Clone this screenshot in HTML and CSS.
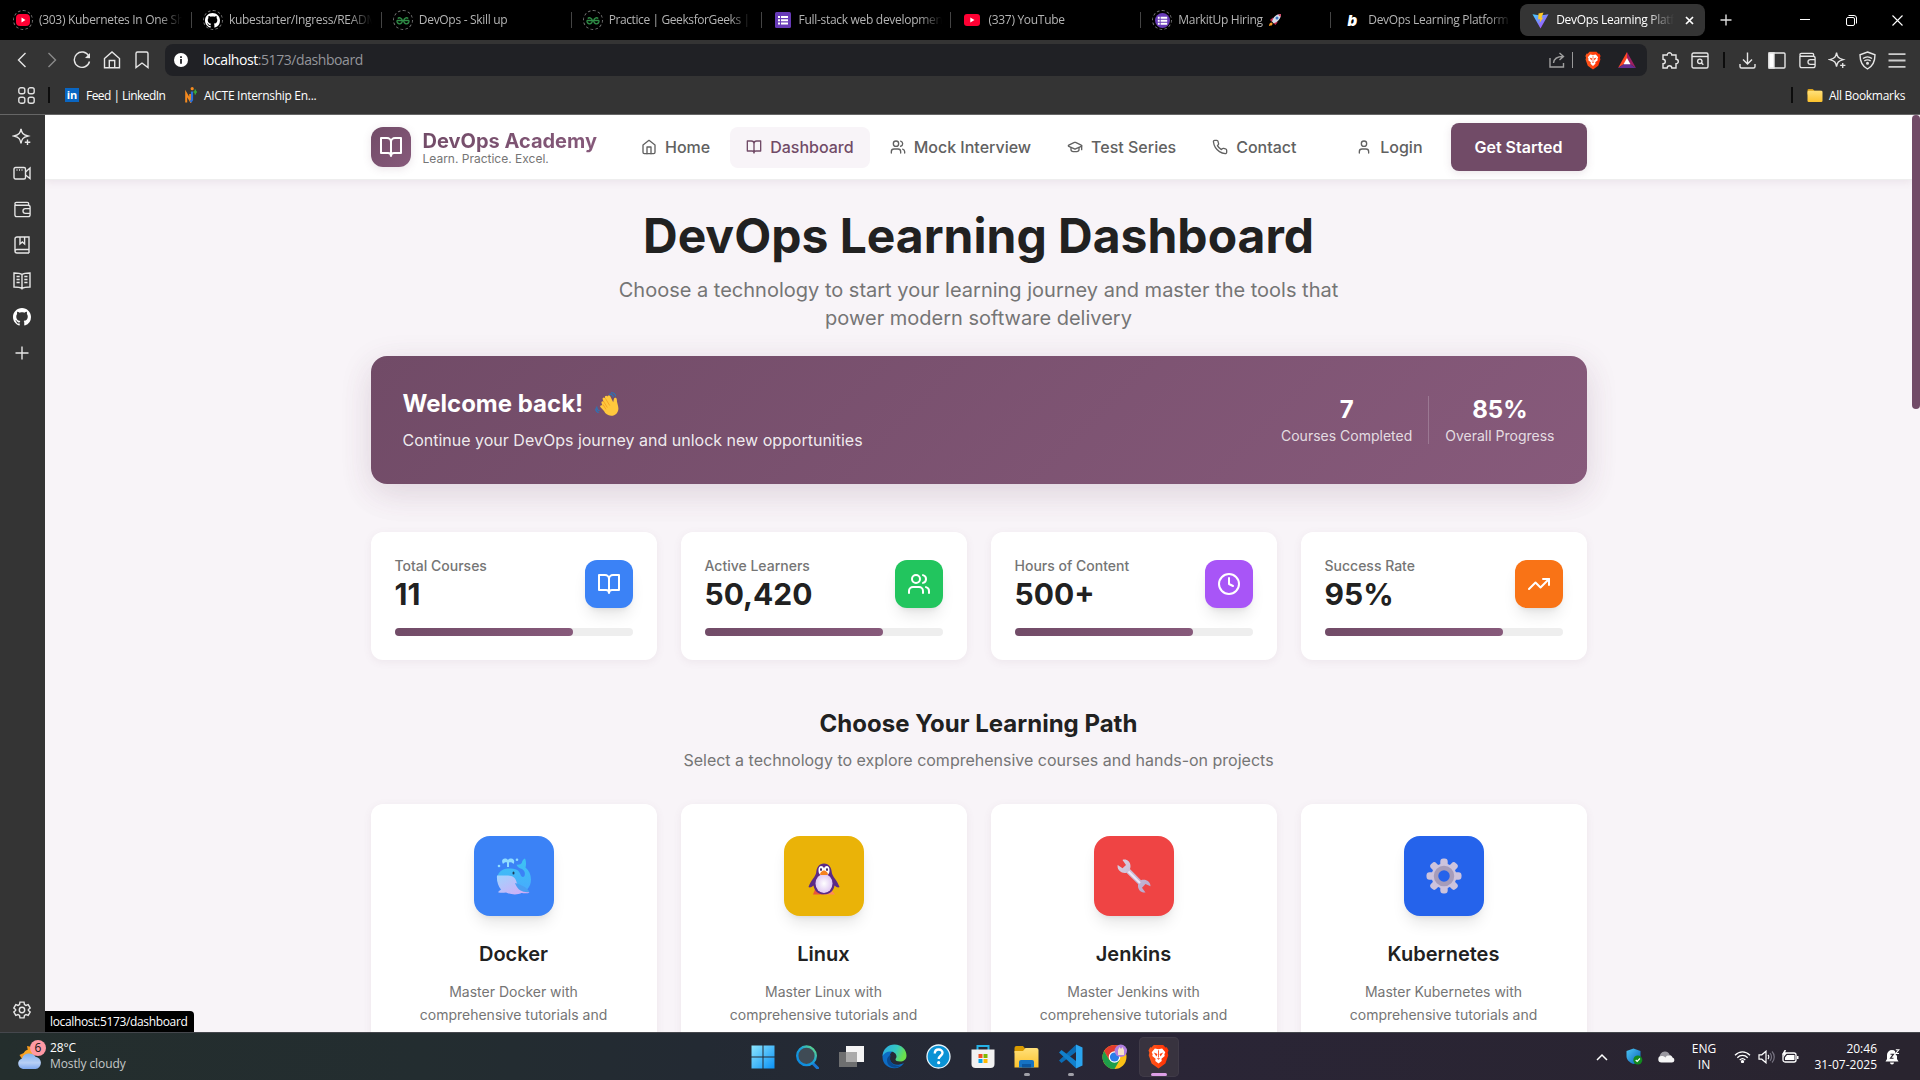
FILE: index.html
```html
<!DOCTYPE html>
<html lang="en">
<head>
<meta charset="utf-8">
<title>DevOps Learning Platform</title>
<link rel="stylesheet" href="styles.css">
</head>
<body>
<svg width="0" height="0" class="defs" aria-hidden="true">
  <defs>
    <linearGradient id="gWin" x1="0" y1="0" x2="1" y2="1"><stop offset="0" stop-color="#8ce6ff"/><stop offset="1" stop-color="#0a91f5"/></linearGradient>
    <linearGradient id="gSearch" x1="0" y1="1" x2="1" y2="0"><stop offset="0" stop-color="#0a84e0"/><stop offset=".55" stop-color="#1aa0d8"/><stop offset="1" stop-color="#6be07a"/></linearGradient>
    <linearGradient id="gEdge" x1="0" y1="0" x2="1" y2=".35"><stop offset="0" stop-color="#2aa9e8"/><stop offset=".6" stop-color="#35c8c0"/><stop offset="1" stop-color="#6be04a"/></linearGradient>
    <linearGradient id="gFolder" x1="0" y1="0" x2="0" y2="1"><stop offset="0" stop-color="#ffe07a"/><stop offset="1" stop-color="#fcc22c"/></linearGradient>
    <linearGradient id="gBrave" x1="0" y1="0" x2="1" y2="0"><stop offset="0" stop-color="#ff5a1f"/><stop offset="1" stop-color="#ff2d00"/></linearGradient>
    <linearGradient id="gVite" x1="0" y1="0" x2="1" y2="1"><stop offset="0" stop-color="#41d1ff"/><stop offset="1" stop-color="#bd34fe"/></linearGradient>
    <linearGradient id="gCloud" x1="0" y1="0" x2="0" y2="1"><stop offset="0" stop-color="#7fb0f0"/><stop offset=".6" stop-color="#b8d0f5"/><stop offset="1" stop-color="#7ea8ee"/></linearGradient>
    <linearGradient id="gWhale" x1="0" y1="0" x2="0" y2="1"><stop offset="0" stop-color="#3cc4f2"/><stop offset="1" stop-color="#48a8ff"/></linearGradient>
    <linearGradient id="gBelly" x1="0" y1="0" x2="1" y2="1"><stop offset="0" stop-color="#9fd4ff"/><stop offset="1" stop-color="#d7a8f5"/></linearGradient>
    <linearGradient id="gMetal" x1="0" y1="0" x2="1" y2="1"><stop offset="0" stop-color="#d9d2e2"/><stop offset="1" stop-color="#b7a5cc"/></linearGradient>
    <radialGradient id="gPeng"><stop offset="0" stop-color="#ffffff"/><stop offset="1" stop-color="#e0c8f2"/></radialGradient>
    <linearGradient id="gShield" x1="0" y1="0" x2="1" y2="1"><stop offset="0" stop-color="#4cc6f5"/><stop offset="1" stop-color="#0a5fb8"/></linearGradient>

    <symbol id="book-open" viewBox="0 0 24 24"><path d="M2 3h6a4 4 0 0 1 4 4v14a3 3 0 0 0-3-3H2zM22 3h-6a4 4 0 0 0-4 4v14a3 3 0 0 1 3-3h7z"/></symbol>
    <symbol id="home" viewBox="0 0 24 24"><path d="m3 9 9-7 9 7v11a2 2 0 0 1-2 2H5a2 2 0 0 1-2-2z"/><path d="M9 22V12h6v10"/></symbol>
    <symbol id="users" viewBox="0 0 24 24"><path d="M16 21v-2a4 4 0 0 0-4-4H6a4 4 0 0 0-4 4v2"/><circle cx="9" cy="7" r="4"/><path d="M22 21v-2a4 4 0 0 0-3-3.87M16 3.13a4 4 0 0 1 0 7.75"/></symbol>
    <symbol id="cap" viewBox="0 0 24 24"><path d="M21.42 10.92a1 1 0 0 0-.02-1.84L12.83 5.180a2 2 0 0 0-1.66 0l-8.570 3.9a1 1 0 0 0 0 1.83l8.570 3.910a2 2 0 0 0 1.66 0z"/><path d="M22 10v6M6 12.500V16a6 3 0 0 0 12 0v-3.500"/></symbol>
    <symbol id="phone" viewBox="0 0 24 24"><path d="M22 16.920v3a2 2 0 0 1-2.180 2 19.790 19.790 0 0 1-8.630-3.070 19.500 19.500 0 0 1-6-6 19.790 19.790 0 0 1-3.070-8.670A2 2 0 0 1 4.110 2h3a2 2 0 0 1 2 1.720c.127.960.361 1.903.700 2.810a2 2 0 0 1-.450 2.110L8.090 9.910a16 16 0 0 0 6 6l1.270-1.270a2 2 0 0 1 2.110-.450c.907.339 1.850.573 2.810.700A2 2 0 0 1 22 16.920z"/></symbol>
    <symbol id="user" viewBox="0 0 24 24"><path d="M19 21v-2a4 4 0 0 0-4-4H9a4 4 0 0 0-4 4v2"/><circle cx="12" cy="7" r="4"/></symbol>
    <symbol id="clock" viewBox="0 0 24 24"><circle cx="12" cy="12" r="10"/><path d="M12 6v6l4 2"/></symbol>
    <symbol id="trend" viewBox="0 0 24 24"><path d="m22 7-8.500 8.500-5-5L2 17"/><path d="M16 7h6v6"/></symbol>
    <symbol id="sparkle" viewBox="0 0 20 20"><path d="M9 1.800c.8 4.500 1.700 5.800 7 7.200-5.300 1.400-6.200 3-7 7.500-.8-4.500-1.700-6.100-7-7.500C7.300 7.600 8.200 6.300 9 1.800zM15.500 12.500v5.500M12.800 15.200h5.500"/></symbol>
    <symbol id="wallet" viewBox="0 0 20 20"><path d="M2 5v10.500a2 2 0 0 0 2 2h12a2 2 0 0 0 2-2V7.500a2 2 0 0 0-2-2H3.500A1.500 1.500 0 0 1 2 4a1.500 1.500 0 0 1 1.500-1.500H15a1.500 1.500 0 0 1 1.500 1.500v1.500M18 9h-5a2.500 2.500 0 0 0 0 5h5"/></symbol>
    <symbol id="github" viewBox="0 0 16 16"><path d="M8 0C3.580 0 0 3.580 0 8c0 3.540 2.290 6.530 5.470 7.590.4.070.550-.170.550-.380 0-.190-.010-.820-.010-1.490-2.010.370-2.530-.490-2.690-.940-.090-.230-.480-.940-.820-1.130-.280-.150-.680-.520-.010-.530.630-.010 1.080.580 1.230.820.720 1.210 1.870.870 2.330.660.070-.520.280-.870.510-1.070-1.780-.2-3.640-.890-3.640-3.950 0-.870.310-1.590.820-2.150-.080-.2-.360-1.020.080-2.120 0 0 .670-.210 2.200.820.640-.180 1.320-.270 2-.270s1.360.090 2 .270c1.530-1.040 2.200-.820 2.200-.820.440 1.100.160 1.920.080 2.120.510.560.820 1.270.820 2.150 0 3.070-1.870 3.750-3.650 3.950.290.250.540.730.540 1.480 0 1.070-.010 1.930-.010 2.200 0 .210.150.460.550.380A8.010 8.010 0 0 0 16 8c0-4.420-3.580-8-8-8z"/></symbol>
    <symbol id="brave" viewBox="0 0 20 24"><path fill="url(#gBrave)" d="M5.500 1h9l2.200 2.400 1.300-.2 1.600 3-.8 2.300.6 2.200-2.800 8L10 23.500 3.400 18.700l-2.800-8 .6-2.200-.8-2.300 1.600-3 1.300.2z"/><path fill="#fff" d="m10 5 3.500-.7 3 3.500-.9 2 .4 1.800-3.200 2.600.3 2L10 18.800l-3.100-2.600.3-2L4 11.600l.4-1.800-.9-2 3-3.500z"/><path fill="#ff4010" d="M5.500 8.200 9 9.500 8 12zM14.500 8.200 11 9.500l1 2.500zM8.300 13.700h3.400L10 15.200zM9.600 6h.8v7h-.8z"/></symbol>
    <symbol id="gfg" viewBox="0 0 16 10"><path fill="none" stroke="#2f8d46" stroke-width="1.500" d="M1 5h14M1.200 5A3 3 0 1 0 7 5a3 3 0 0 0-5-2.300M14.800 5A3 3 0 1 1 9 5a3 3 0 0 1 5-2.300"/></symbol>
    <symbol id="yt" viewBox="0 0 16 12"><rect width="16" height="12" rx="3" fill="#ff0033"/><path fill="#fff" d="M6.300 3.500v5l4.200-2.500z"/></symbol>
    <symbol id="forms" viewBox="0 0 16 16"><rect width="16" height="16" rx="1.500" fill="#673ab7"/><path fill="#fff" d="M3 4h2v2H3zM3 7.200h2v2H3zM3 10.400h2v2H3zM6 4h7v2H6zM6 7.200h7v2H6zM6 10.400h7v2H6z"/></symbol>
    <symbol id="folder" viewBox="0 0 16 16"><path fill="#d9a01a" d="M0 2.500A1.500 1.500 0 0 1 1.500 1h4L7.500 3H14v4H0z"/><rect y="3" width="16" height="12" rx="1.300" fill="url(#gFolder)"/></symbol>
  </defs>
</svg>

<div class="tabstrip">
  <div class="tab"><span class="fav ring"><svg width="14" height="12" viewBox="0 0 14 12"><rect width="14" height="12" rx="4" fill="#ff0033"/><path fill="#fff" d="M5.500 3.500v5l4-2.500z"/></svg></span><span class="tab-title">(303) Kubernetes In One Sh</span></div>
  <div class="tab"><span class="fav ring"><svg width="15" height="15" fill="#fff"><use href="#github"/></svg></span><span class="tab-title">kubestarter/Ingress/README</span></div>
  <div class="tab"><span class="fav ring"><svg width="14" height="9"><use href="#gfg"/></svg></span><span class="tab-title">DevOps - Skill up</span></div>
  <div class="tab"><span class="fav ring"><svg width="14" height="9"><use href="#gfg"/></svg></span><span class="tab-title tight">Practice | GeeksforGeeks | A</span></div>
  <div class="tab"><span class="fav"><svg width="16" height="16"><use href="#forms"/></svg></span><span class="tab-title">Full-stack web developmen</span></div>
  <div class="tab"><span class="fav"><svg width="16" height="12"><use href="#yt"/></svg></span><span class="tab-title">(337) YouTube</span></div>
  <div class="tab"><span class="fav ring"><svg class="round" width="15" height="15"><use href="#forms"/></svg></span><span class="tab-title">MarkitUp Hiring <svg class="rocket" width="14" height="14" viewBox="0 0 14 14"><path fill="#c22a4e" d="m2 7 3-2.500 1 1.500-2 3zM7.500 12l2.200-3-1.500-1-3 2z"/><path fill="#d8dde8" d="M4 8.500C5 4.500 8 1 13 1c0 4.500-3 8-7.500 9.200z"/><path fill="#d63a5c" d="M10 1.500 13 1l-.4 3z"/><circle cx="9" cy="5" r="1.500" fill="#3a78c9"/><path fill="#f59a23" d="M1 13c0-2 1-3.500 2.600-3.600l1 1C4.500 12 3 13 1 13z"/></svg></span></div>
  <div class="tab last"><span class="fav"><b class="b-mark">b</b></span><span class="tab-title">DevOps Learning Platform</span></div>
  <div class="tab active"><span class="fav"><svg width="17" height="17" viewBox="0 0 17 17"><path fill="url(#gVite)" d="M.5 2.200 8.500 16.500 16.500 2.200 8.500 3.600z"/><path fill="#ffc824" d="m11.500.5-5 1-.3 6 2-.4-.6 4 3.600-5.500-1.800.3z"/></svg></span><span class="tab-title">DevOps Learning Platf</span><svg class="tab-x" width="9" height="9" viewBox="0 0 9 9"><path d="m1 1 7 7M8 1 1 8" stroke="#fff" stroke-width="1.700"/></svg></div>
  <svg class="new-tab" width="12" height="12" viewBox="0 0 12 12"><path d="M6 .5v11M.5 6h11" stroke="#ddd" stroke-width="1.400"/></svg>
  <div class="win-controls">
    <span><svg width="10" height="10"><path d="M0 4.500h10" stroke="#fff"/></svg></span>
    <span><svg width="11" height="11" fill="none" stroke="#fff"><rect x=".5" y="2.500" width="8" height="8" rx="1.500"/><path d="M2.500.5H8A2.500 2.500 0 0 1 10.500 3v5.500"/></svg></span>
    <span><svg width="11" height="11"><path d="m.5.5 10 10M10.500.5l-10 10" stroke="#fff" stroke-width="1.100"/></svg></span>
  </div>
</div>

<div class="toolbar">
  <div class="slots">
    <span><svg width="10" height="16" viewBox="0 0 10 16"><path d="M8.500 1 1.500 8l7 7"/></svg></span>
    <span class="dim"><svg width="10" height="16" viewBox="0 0 10 16"><path d="m1.500 1 7 7-7 7"/></svg></span>
    <span><svg width="18" height="18" viewBox="0 0 18 18"><path d="M15.800 5A7.700 7.700 0 1 0 16.500 10.500"/><path d="m12 7 5 .3L17 2z" fill="#e6e6e6" stroke="none"/></svg></span>
    <span><svg width="18" height="18" viewBox="0 0 18 18"><path d="M1.500 7.500 9 1l7.500 6.500V16.700h-15zM6.300 16.500V9.500h5.400v7"/></svg></span>
    <span><svg width="14" height="18" viewBox="0 0 14 18"><path d="M1 2.500A1.500 1.500 0 0 1 2.500 1h9A1.500 1.500 0 0 1 13 2.500v14l-6-4.500-6 4.500z"/></svg></span>
  </div>
  <div class="urlbar">
    <svg class="info" width="14" height="14" viewBox="0 0 14 14"><circle cx="7" cy="7" r="7" fill="#fff"/><path d="M6.100 6h1.800v4.700H6.100zM6.100 3.200h1.800v1.700H6.100z" fill="#202125"/></svg>
    <span class="url"><span class="host">localhost</span>:5173/dashboard</span>
    <svg class="share" width="16" height="16" viewBox="0 0 16 16" fill="none" stroke="#a0a0a0" stroke-width="1.400"><path d="M1 6v9h13.500v-4M4.500 11C5 6.500 8 4.500 14 4.500M10.500 1 14.500 4.500l-4 3.500"/></svg>
    <i class="url-sep"></i>
    <svg class="lion" width="16" height="19"><use href="#brave"/></svg>
    <svg class="bat" width="18" height="16" viewBox="0 0 18 16"><path fill="#ff4724" d="M9 0 0 16 6 12l3-5z"/><path fill="#9e1f63" d="m9 0 9 16-6-4-3-5z"/><path fill="#662d91" d="M0 16h18l-6-4H6z"/><path fill="#fff" d="m9 6 3.500 6.200h-7z"/></svg>
  </div>
  <div class="slots right">
    <span><svg width="19" height="19" viewBox="0 0 19 19"><path d="M2 4h4.200a2.300 2.300 0 1 1 4.600 0H15v4.200a2.300 2.300 0 1 1 0 4.600V17h-4.200a2.300 2.300 0 0 0-4.600 0H2v-4.200a2.300 2.300 0 0 0 0-4.600z"/></svg></span>
    <span><svg width="18" height="17" viewBox="0 0 18 17"><rect x="1" y="1" width="16" height="15" rx="1.500"/><path d="M1 4.500h16"/><circle cx="8.800" cy="9.300" r="2.200"/><path d="m10.500 11 1.800 1.800"/></svg></span>
    <i class="sep"></i>
    <span><svg width="17" height="17" viewBox="0 0 17 17"><path d="M8.500.5v11M4 7.500l4.500 4.500L13 7.500M1 12v2.500A1.500 1.500 0 0 0 2.500 16h12a1.500 1.500 0 0 0 1.500-1.500V12"/></svg></span>
    <span><svg width="18" height="17" viewBox="0 0 18 17"><rect x="1" y="1" width="16" height="15" rx="1"/><path d="M1 1h5v15H1z" fill="#fff"/></svg></span>
    <span><svg width="19" height="19"><use href="#wallet"/></svg></span>
    <span><svg width="19" height="19"><use href="#sparkle"/></svg></span>
    <span><svg width="17" height="19" viewBox="0 0 17 19"><path d="M8.500 1 16 3.800c0 7-2 11.400-7.500 14.200C3 15.200 1 10.800 1 3.800zM4 7.500c3-2.200 6-2.200 9 0M5.300 10c2-1.400 4.400-1.400 6.400 0"/><circle cx="8.500" cy="12.200" r=".8"/></svg></span>
    <span><svg width="18" height="15" viewBox="0 0 18 15" class="burger"><path d="M.5 1.200h17M.5 7.500h17M.5 13.800h17"/></svg></span>
  </div>
</div>

<div class="bookmarks">
  <svg class="apps" width="17" height="17" viewBox="0 0 17 17" fill="none" stroke="#e0e0e0" stroke-width="1.400"><rect x=".8" y=".8" width="6" height="6" rx="2"/><rect x="10.200" y=".8" width="6" height="6" rx="2"/><rect x=".8" y="10.200" width="6" height="6" rx="2"/><rect x="10.200" y="10.200" width="6" height="6" rx="2"/></svg>
  <i class="sep bsep"></i>
  <span class="linkedin">in</span>
  <span class="bm bm1">Feed | LinkedIn</span>
  <svg class="aicte" width="12" height="16" viewBox="0 0 12 16"><path d="M1.200 15.500V6.500l4 7V7" fill="none" stroke="#f58a1f" stroke-width="2"/><path d="M7 4.500V13l-1.500 2" fill="none" stroke="#2a6fdb" stroke-width="2.200"/><circle cx="7.200" cy="1.700" r="1.600" fill="#f58a1f"/><path d="M10.300 2.500v5M8.500 5h3.500" stroke="#35a83a" stroke-width="1.500"/></svg>
  <span class="bm bm2">AICTE Internship En...</span>
  <i class="sep rsep"></i>
  <svg width="16" height="15" class="bfolder"><use href="#folder"/></svg>
  <span class="bm bm3">All Bookmarks</span>
</div>

<div class="window">
  <nav class="sidebar">
    <span><svg width="20" height="20"><use href="#sparkle"/></svg></span>
    <span><svg width="18" height="14" viewBox="0 0 18 14"><rect x="1" y="1.500" width="11.500" height="11.500" rx="1.500"/><path d="m12.500 6 4.500-4v10.500l-4.500-3.500M3.500 4h1M6 4h1M8.500 4h1"/></svg></span>
    <span><svg width="19" height="19"><use href="#wallet"/></svg></span>
    <span><svg width="16" height="18" viewBox="0 0 16 18"><path d="M15 13.500V1H3a2 2 0 0 0-2 2v12a2 2 0 0 0 2 2h12M15 13.500H3a1.800 1.800 0 0 0-2 1.600M15 13.500V17M6 1v7l2.300-2 2.300 2V1"/></svg></span>
    <span><svg width="18" height="18" viewBox="0 0 18 18"><path d="M9 2.500C7 1 4 1 1 1v14c3 0 6 0 8 1.500C11 15 14 15 17 15V1c-3 0-6 0-8 1.500zM9 2.500v15M3.500 4.500h3.200M3.500 7.500h3.200M3.500 10.500h3.200M11.300 4.500h3.200M11.300 7.500h3.200M11.300 10.500h3.200"/></svg></span>
    <span class="solid"><svg width="18" height="18"><use href="#github"/></svg></span>
    <span><svg width="14" height="14" viewBox="0 0 14 14"><path d="M7 .5v13M.5 7h13"/></svg></span>
    <span class="settings"><svg width="18" height="18" viewBox="0 0 24 24" class="gear"><path d="m9.300 1.500-.6 3.200-2 1.200-3-1.200L1 9.400l2.500 2v1.200l-2.500 2 2.700 4.700 3-1.200 2 1.200.6 3.200h5.400l.6-3.200 2-1.200 3 1.200 2.700-4.700-2.500-2v-1.200l2.500-2-2.700-4.700-3 1.200-2-1.200-.6-3.200z"/><circle cx="12" cy="12" r="3.600"/></svg></span>
  </nav>

  <div class="page">
    <header class="site-header">
      <div class="container header-row">
        <div class="logo"><svg class="ln" width="24" height="24"><use href="#book-open"/></svg></div>
        <div class="brand"><div class="brand-name">DevOps Academy</div><div class="brand-tag">Learn. Practice. Excel.</div></div>
        <nav class="menu">
          <a><svg class="ln" width="16" height="16"><use href="#home"/></svg>Home</a>
          <a class="current"><svg class="ln" width="16" height="16"><use href="#book-open"/></svg>Dashboard</a>
          <a><svg class="ln" width="16" height="16"><use href="#users"/></svg>Mock Interview</a>
          <a><svg class="ln" width="16" height="16"><use href="#cap"/></svg>Test Series</a>
          <a><svg class="ln" width="16" height="16"><use href="#phone"/></svg>Contact</a>
        </nav>
        <div class="auth">
          <a class="login"><svg class="ln" width="16" height="16"><use href="#user"/></svg>Login</a>
          <a class="cta">Get Started</a>
        </div>
      </div>
    </header>

    <main class="container">
      <h1>DevOps Learning Dashboard</h1>
      <p class="lead">Choose a technology to start your learning journey and master the tools that power modern software delivery</p>

      <section class="banner">
        <div>
          <h2>Welcome back!
            <svg class="wave" width="24" height="24" viewBox="0 0 24 24"><path fill="none" stroke="#2b74b8" stroke-width="1.200" d="M14 2.300c2-.6 4 .6 4.500 3M16 .8c2.500-.3 4.300 1.200 4.600 3.500M1.800 14.500c-.3 2 .7 3.700 2.700 4.500M.7 16.500c0 2 1 3.500 3 4.200"/><path fill="#ffc83d" d="M4.600 11.200c-.8-1.300 1-2.600 2-1.300L5.700 7.300c-.7-1.500 1.400-2.600 2.200-1.200l.4.700-.3-1.200c-.6-1.600 1.600-2.500 2.300-1 .6-1.600 2.600-1.200 3.200.2l2.700 5.400.6-3c.5-2 3-1.700 3 .2-.1 3 1.600 5.800 1.600 9 0 4-2.800 7.300-7.200 7.300-3.600 0-5.800-1.800-7.200-4.600L3.300 15c-.6-1.500 1-2.500 2-1.400z" transform="translate(2 0)"/><path fill="none" stroke="#f29a1f" stroke-width=".8" d="m8.300 9 4 6.500M10.500 6.500l4.200 7M8 12.500l3 5"/></svg>
          </h2>
          <p>Continue your DevOps journey and unlock new opportunities</p>
        </div>
        <div class="banner-stats">
          <div><strong>7</strong><span>Courses Completed</span></div>
          <i></i>
          <div><strong>85%</strong><span>Overall Progress</span></div>
        </div>
      </section>

      <section class="grid stats">
        <div class="card stat"><div class="stat-row"><div><span>Total Courses</span><strong>11</strong></div><div class="badge blue"><svg class="ln" width="24" height="24"><use href="#book-open"/></svg></div></div><div class="track"><i></i></div></div>
        <div class="card stat"><div class="stat-row"><div><span>Active Learners</span><strong>50,420</strong></div><div class="badge green"><svg class="ln" width="24" height="24"><use href="#users"/></svg></div></div><div class="track"><i></i></div></div>
        <div class="card stat"><div class="stat-row"><div><span>Hours of Content</span><strong>500+</strong></div><div class="badge purple"><svg class="ln" width="24" height="24"><use href="#clock"/></svg></div></div><div class="track"><i></i></div></div>
        <div class="card stat"><div class="stat-row"><div><span>Success Rate</span><strong>95%</strong></div><div class="badge orange"><svg class="ln" width="24" height="24"><use href="#trend"/></svg></div></div><div class="track"><i></i></div></div>
      </section>

      <h2 class="section-title">Choose Your Learning Path</h2>
      <p class="section-sub">Select a technology to explore comprehensive courses and hands-on projects</p>

      <section class="grid">
        <div class="card course">
          <div class="tile blue"><svg width="36" height="38" viewBox="0 0 36 38"><path fill="#8fdcff" d="M7 7c-2-3-.5-5.500 2-5.500 1.500 0 2.500.6 3 1.500.5-1 1.800-1.700 3.200-1.500 3 .3 3.800 3 2.300 5.500-1.500-2-3-2-4.500-1.500V10h-2V5.500C9.500 5 8.200 5.500 7 7z"/><circle cx="3" cy="9" r="1.300" fill="#8fdcff"/><circle cx="21" cy="2.800" r="1.300" fill="#8fdcff"/><path fill="url(#gWhale)" d="M26 12c-3-1-5-2.500-5.500-4.500 2 .5 4.500 0 5.500-2 .3-2 1.500-3.500 3-4 1.500 3 1 7 .5 9 3.500 3 5.500 7 5.500 12 0 8-5.500 13.500-14 14.500L1 24c-.5-8 5-12.500 11-12.500 8 0 11 1.500 12.500 6 .5 2 2.500 3.500 4 1.500C29.500 16 28.500 13.500 26 12z"/><path fill="url(#gBelly)" d="M1 18.500c7 .5 13-1 17 2 3 2.500 2 8 8 12 3 2 5 1.500 7.500 3-2.500 1.500-7 .5-8 .500C22 38 15 38 10 35.500c-3 .5-6 .5-8-.3 1-1.500 2.500-2 3-2.700C2 29 .5 23.500 1 18.500z"/><path fill="#4a9ef2" d="M19 26c5 1.500 12 4 14.500 9-5 1-12-1-14.500-9z"/><ellipse cx="17.500" cy="16" rx="1" ry="1.600" fill="#1d3b58"/></svg></div>
          <h3>Docker</h3><p>Master Docker with comprehensive tutorials and real-world projects</p>
        </div>
        <div class="card course">
          <div class="tile yellow"><svg class="penguin" width="32" height="32" viewBox="0 0 32 32"><path fill="#e8553c" d="m8 24-3 7.500h12l-4-5z"/><path fill="#ff8a5c" d="m19 26-3 5.500h11l-5-6z"/><path fill="#5b2a86" d="M16 .5c-5 0-7.500 4-7.800 9-.5 4-5.500 8-7.700 14.500 1 1 3 .5 5-1.500C6.500 28 10 31.300 16 31.300S25.500 28 26.500 22.500c2 2 4 2.500 5 1.500C29.300 17.500 24.300 13.500 23.800 9.500 23.500 4.500 21 .5 16 .5z"/><path fill="#fff" d="M16 5.500C14.500 1.500 10 2.500 10.500 8c0 3 2 4.500 5.500 4.500S21.500 11 21.500 8c.5-5.500-4-6.500-5.500-2.500z"/><ellipse cx="16" cy="20.500" rx="8.500" ry="9.500" fill="url(#gPeng)"/><ellipse cx="13" cy="6.500" rx=".9" ry="1.600" fill="#3a1d5c"/><ellipse cx="19" cy="6.500" rx=".9" ry="1.600" fill="#3a1d5c"/><path fill="#f58220" d="M16 7.500c1.500 0 4 2 4 4 0 .8-8 .8-8 0 0-2 2.500-4 4-4z"/></svg></div>
          <h3>Linux</h3><p>Master Linux with comprehensive tutorials and real-world projects</p>
        </div>
        <div class="card course">
          <div class="tile red"><svg width="34" height="34" viewBox="0 0 34 34"><path fill="url(#gMetal)" d="M5.500 1C9-.500 13.500 2.500 13.500 7c0 1.500-.2 2.300-.6 3L24 21.200c4.500-1.700 9.500 1.300 9.500 6L28.500 25 25 28.700l3.500 4.800c-4.500.8-8.500-3.500-7.300-8.200L9.500 13.700C5 15-.3 11.500.7 6l4.800 3.300L9 6z"/><path stroke="#efe8f7" stroke-width="2" d="m11.500 12.500 11.500 11.500"/></svg></div>
          <h3>Jenkins</h3><p>Master Jenkins with comprehensive tutorials and real-world projects</p>
        </div>
        <div class="card course">
          <div class="tile royal"><svg width="36" height="36" viewBox="-18 -18 36 36"><g fill="#cdc3dc"><circle r="12.500"/><g id="teeth"><rect x="-3.700" y="-17.500" width="7.400" height="35" rx="3"/><rect x="-17.500" y="-3.700" width="35" height="7.400" rx="3"/></g><use href="#teeth" transform="rotate(45)"/></g><circle r="8" fill="#2563eb" stroke="#a69cba" stroke-width="4.500"/></svg></div>
          <h3>Kubernetes</h3><p>Master Kubernetes with comprehensive tutorials and real-world projects</p>
        </div>
      </section>
    </main>
  </div>
  <div class="scrollbar"><i></i></div>
  <div class="status">localhost:5173/dashboard</div>
</div>

<footer class="taskbar">
  <div class="weather">
    <div class="weather-icon"><svg width="28" height="32" viewBox="0 0 28 32"><path fill="#f59a1f" d="m10 6 1 5-8.500 4L6 20.500l9-4V7z"/><circle cx="12" cy="15" r="5.500" fill="#f9a825"/><path fill="url(#gCloud)" d="M6 29a6 5.500 0 0 1-1-10.500 7.500 7 0 0 1 13.500-1.800A6.200 6.200 0 0 1 18.500 29z"/></svg><b>6</b></div>
    <div class="weather-text"><span class="w1">28°C</span><span class="w2">Mostly cloudy</span></div>
  </div>
  <div class="dock">
    <span><svg width="24" height="24" viewBox="0 0 24 24" fill="url(#gWin)"><path d="M.5.5h11v11H.5zM12.500.5h11v11h-11zM.5 12.500h11v11H.5zM12.500 12.500h11v11h-11z"/></svg></span>
    <span><svg width="24" height="24" viewBox="0 0 24 24"><path d="m17.500 18 5 5" stroke="#1976d2" stroke-width="3" stroke-linecap="round"/><circle cx="11.500" cy="10.800" r="9.300" fill="#3f4b55" stroke="url(#gSearch)" stroke-width="2.400"/></svg></span>
    <span><svg width="26" height="24" viewBox="0 0 26 24"><path fill="#f4f4f4" d="M8 1h18v16H8z"/><path fill="#777" fill-opacity=".9" d="M1 7h18v15H1z"/><path fill="#aaa" d="M8 7h11v10H8z"/></svg></span>
    <span><svg width="25" height="25" viewBox="0 0 25 25"><path fill="#0d6cc4" d="M.5 13C.5 6 6 4 11 7c-3 2-4 5-3 9 1.500 4.500 7 6.500 14 3-5.500 9-21.500 6-21.500-6z"/><path fill="url(#gEdge)" d="M.5 12C1 5 6 .5 12.500.5 20 .5 24.500 6 24.500 11.500c0 4-3 6-6.500 6-3 0-4.500-1-4.500-2s1-1.500 1-3c0-3-3-5-6-5C4.500 7.500 2 9.500.5 12z"/><path fill="#0a4a8f" d="M9 11c-3 6 2 12 9.500 10.500C15 25.500 5 24 5 16c0-2.500 2-4.500 4-5z"/></svg></span>
    <span><svg width="25" height="25" viewBox="0 0 25 25"><circle cx="12.500" cy="12.500" r="11.500" fill="#0b93d5" stroke="#e8f4fb" stroke-width="1.300"/><path d="M8.800 9.500c0-5.300 7.700-5 7.700-.7 0 2.900-3.800 3-3.800 6.200" fill="none" stroke="#fff" stroke-width="2.400"/><circle cx="12.700" cy="18.700" r="1.600" fill="#fff"/></svg></span>
    <span><svg width="24" height="25" viewBox="0 0 24 25"><path d="M6.500 6V2h11v4" fill="none" stroke="#25b1e6" stroke-width="2"/><path fill="#f2f2f2" d="M.5 5.500h23V20a4 4 0 0 1-4 4h-15a4 4 0 0 1-4-4z"/><path fill="#f25022" d="M7.500 10h4v4h-4z"/><path fill="#7fba00" d="M12.500 10h4v4h-4z"/><path fill="#00a4ef" d="M7.500 15h4v4h-4z"/><path fill="#ffb900" d="M12.500 15h4v4h-4z"/></svg></span>
    <span class="running"><svg width="25" height="23" viewBox="0 0 25 23"><path fill="#d99a00" d="M.5 3A2 2 0 0 1 2.500 1H9l2.500 3v4H.5z"/><path fill="url(#gFolder)" d="M.5 6H9l2.500-3h11a2 2 0 0 1 2 2v17.500H.5z"/><path fill="#1573c4" d="M5 22.500V17a2 2 0 0 1 2-2h11a2 2 0 0 1 2 2v5.500z"/><path fill="#0c57a0" d="M8 19h9v3.500H8z"/></svg></span>
    <span class="running"><svg width="25" height="25" viewBox="0 0 25 25"><path fill="#0b6cb5" d="M1 16.500 18 .7V8L3.500 19z"/><path fill="#1180cc" d="M1 8.500 18 24.300V17L3.500 6z"/><path fill="#2aa5f0" d="m18 .5 6.500 3v18l-6.500 3z"/></svg></span>
    <span><svg width="26" height="26" viewBox="0 0 26 26"><circle cx="12.500" cy="13" r="12" fill="#fbc116"/><path fill="#e33b2e" d="M2.100 7A12 12 0 0 1 22.900 7H12.500l-5.200 9z"/><path fill="#1e9e4a" d="M2.100 7a12 12 0 0 0 10.400 18l5.200-9H7.300z"/><circle cx="12.500" cy="13" r="5.800" fill="#fff"/><circle cx="12.500" cy="13" r="4.600" fill="#2b7de9"/><circle cx="18.800" cy="6.800" r="6.200" fill="#b07fe0"/><path fill="#f5e3c8" d="M16 11V6l1.500-3L19 5l1.500-2L22 6v5z"/></svg></span>
    <span class="focused"><svg width="21" height="25"><use href="#brave"/></svg></span>
  </div>
  <div class="tray">
    <span class="i1"><svg width="12" height="8" viewBox="0 0 12 8"><path d="m1 7 5-5 5 5" fill="none" stroke="#fff" stroke-width="1.500"/></svg></span>
    <span class="i1"><svg width="17" height="17" viewBox="0 0 17 17"><path fill="url(#gShield)" d="M7.500.5 14.500 3v5c0 4-3 6.500-7 8-4-1.500-7-4-7-8V3z"/><circle cx="11.800" cy="12" r="4.500" fill="#128a1e"/><path d="m9.700 12 1.500 1.500 2.700-3" fill="none" stroke="#fff" stroke-width="1.200"/></svg></span>
    <span class="i1"><svg width="17" height="12" viewBox="0 0 17 12"><path fill="#9a98a0" d="M2 7a5 5 0 0 1 5-6.500c2.500 0 4 1.300 4.700 3.200L6 8z"/><path fill="#f5f5f5" d="M3.500 11.500a3.200 3.200 0 0 1 0-6.400c1.500 0 2.500.5 4 1.300 1-2.500 6-3 7 0a2.600 2.600 0 0 1-.5 5.100z"/></svg></span>
    <span class="lang"><b>ENG</b><b>IN</b></span>
    <span class="i2"><svg width="17" height="13" viewBox="0 0 17 13" fill="none" stroke="#fff" stroke-width="1.300"><path d="M1 5.200c4.500-4.500 10.500-4.500 15 0M3.300 7.700c3-3 7.400-3 10.400 0M5.700 10c1.700-1.600 3.900-1.600 5.600 0"/><circle cx="8.500" cy="11.600" r="1" fill="#fff"/></svg></span>
    <span class="i2"><svg width="17" height="14" viewBox="0 0 17 14" fill="none" stroke="#fff" stroke-width="1.200"><path d="M1 4.800h2.800L8 1.200v11.600L3.800 9.200H1z"/><path d="M10 5c1 1 1 3 0 4"/><path stroke="#777482" d="M12 3.200c2 2 2 5.600 0 7.600M14 1.500c3 3 3 8 0 11"/></svg></span>
    <span class="i2"><svg width="17" height="13" viewBox="0 0 17 13"><rect x="1" y="3" width="13" height="9" rx="2" fill="none" stroke="#fff" stroke-width="1.300"/><path fill="#fff" d="M5 5h7.500v5H3V7.500zM15 6h1.500v3H15zM2.500 0 0 4.500h2L1 8l4-5H3l1-3z"/></svg></span>
    <span class="datetime"><b class="d1">20:46</b><b class="d2">31-07-2025</b></span>
    <span class="bell"><svg width="15" height="16" viewBox="0 0 15 16"><path fill="#fff" d="M7 1a5 5 0 0 0-5 5v4l-1.500 2.500h13L12 10V6a5 5 0 0 0-5-5zM5 13.500h4a2 2 0 0 1-4 0z"/><path d="M5.500 5.200h3l-3 4h3" fill="none" stroke="#29242f" stroke-width="1.100"/><path d="M9.500-.5h5.500v6l-4 1z" fill="#29242f"/><path d="M10.800.8h3l-3 3.700h3.200" fill="none" stroke="#fff" stroke-width="1.100"/></svg></span>
  </div>
</footer>
</body>
</html>
```
FILE: styles.css
```css
* { box-sizing: border-box; }
body { margin: 0; width: 1920px; height: 1080px; overflow: hidden; display: flex; flex-direction: column; background: #343434; font-family: "Open Sans", "Noto Sans", sans-serif; font-size: 12px; color: #fff; }
svg { display: block; flex: none; }
.defs { position: absolute; }
h1, h2, h3, p { margin: 0; }

/* browser tabs */
.tabstrip { height: 40px; flex: none; background: #000; display: flex; align-items: center; padding-left: 1px; }
.tab { position: relative; width: 189.9px; height: 32px; display: flex; align-items: center; padding-left: 10px; gap: 4px; color: #b4b4b4; }
.tab:not(.last):not(.active)::after { content: ""; position: absolute; right: -1px; top: 8px; width: 1px; height: 16px; background: #444; }
.fav { width: 24px; height: 24px; flex: none; display: flex; align-items: center; justify-content: center; }
.ring { width: 20px; height: 20px; margin: 0 2px; border: 1.5px dashed #777; border-radius: 50%; }
.round { border-radius: 50%; }
.tab-title { width: 143px; overflow: hidden; white-space: nowrap; line-height: 18px; letter-spacing: -0.3px; -webkit-mask-image: linear-gradient(90deg, #000 120px, transparent 143px); mask-image: linear-gradient(90deg, #000 120px, transparent 143px); }
.tight { letter-spacing: -0.4px; }
.rocket { display: inline-block; vertical-align: -3px; margin-left: 2px; }
.b-mark { font: italic 900 15px "Inter", sans-serif; color: #fff; }
.tab.active { width: 185px; background: #343434; border-radius: 8px; padding-left: 8px; color: #fff; }
.tab.active .tab-title { width: 118px; -webkit-mask-image: linear-gradient(90deg, #000 90px, transparent 118px); mask-image: linear-gradient(90deg, #000 90px, transparent 118px); }
.tab-x { margin-left: 7px; }
.new-tab { margin-left: 15px; }
.win-controls { display: flex; margin-left: auto; }
.win-controls span { width: 46px; display: flex; justify-content: center; }

/* toolbar */
.toolbar { height: 40px; flex: none; display: flex; align-items: center; padding: 0 8px 0 7px; }
.slots { display: flex; align-items: center; width: 158px; }
.slots span { width: 30px; display: flex; justify-content: center; }
.slots svg, .sidebar svg { fill: none; stroke: #e6e6e6; stroke-width: 1.4; }
.slots .dim svg { stroke: #8a8a8a; }
.slots.right { width: auto; margin-left: auto; }
.slots .burger { stroke: #ccc; stroke-width: 1.8; }
.sep { width: 2px; height: 16px; background: #0c0c0c; margin: 0 7.5px; flex: none; }
.urlbar { width: 1482px; height: 32px; background: #202125; border-radius: 8px; display: flex; align-items: center; padding-left: 9px; }
.url { margin-left: 15px; font-size: 14px; line-height: 20px; letter-spacing: -0.43px; color: #94959a; flex: 1; }
.host { color: #fff; }
.url-sep { width: 1px; height: 16px; background: #999; margin: 0 12px 0 7px; }
.bat { margin: 0 11px 0 17px; }

/* bookmarks */
.bookmarks { height: 35px; flex: none; border-bottom: 1px solid #666; display: flex; align-items: center; padding: 0 16px 4px 18px; }
.bsep { margin: 0 15px 0 13px; }
.linkedin { width: 14px; height: 14px; background: #0a66c2; font: bold 11px/14px "Open Sans", sans-serif; text-align: center; margin-right: 7px; }
.bm { white-space: nowrap; letter-spacing: -0.3px; }
.bm1 { width: 99px; letter-spacing: -0.55px; }
.aicte { margin-right: 7px; }
.rsep { margin: 0 14px 0 auto; }
.bfolder { margin-right: 6px; }
.bm3 { width: 75px; }

/* window body */
.window { position: relative; flex: 1; min-height: 0; display: flex; }
.sidebar { width: 45px; flex: none; display: flex; flex-direction: column; padding: 4px 1px 4px 0; }
.sidebar span { height: 36px; display: flex; align-items: center; justify-content: center; }
.sidebar .solid svg { fill: #fff; stroke: none; }
.sidebar .settings { margin-top: auto; }
.sidebar .gear { stroke-width: 1.9; }
.page { flex: 1; overflow: hidden; background: #f8f4f8; font-family: "Inter", sans-serif; color: #212121; }
.scrollbar { width: 8px; flex: none; background: #f8f4f8; }
.scrollbar i { display: block; height: 294px; border-radius: 4px; background: #714b67; }
.status { position: absolute; left: 45px; bottom: 0; width: 149px; height: 21px; background: #000; border-top-right-radius: 4px; padding-left: 5px; line-height: 21px; letter-spacing: -0.35px; white-space: nowrap; }

.ln { fill: none; stroke: currentColor; stroke-width: 2; stroke-linecap: round; stroke-linejoin: round; }
.container { width: 1216px; margin: 0 auto 0 325.5px; }
.site-header { height: 65px; background: #fff; border-bottom: 1px solid #eee; box-shadow: 0 2px 8px rgba(113, 75, 103, .1); position: relative; }
.header-row { height: 64px; display: flex; align-items: center; }
.logo { width: 40px; height: 40px; border-radius: 12px; background: linear-gradient(135deg, #714b67, #875a7b); color: #fff; display: flex; align-items: center; justify-content: center; box-shadow: 0 2px 8px rgba(113, 75, 103, .15); }
.brand { margin-left: 12px; width: 202.500px; }
.brand-name { font-size: 20px; font-weight: 700; line-height: 28px; background: linear-gradient(135deg, #714b67, #875a7b); background-clip: text; -webkit-background-clip: text; color: transparent; width: max-content; }
.brand-tag { font-size: 12px; line-height: 16px; margin-top: -4px; color: #757575; }
.menu { display: flex; gap: 4px; }
.menu a, .login { display: flex; align-items: center; gap: 8px; height: 41px; padding: 0 16px; border-radius: 8px; font-size: 16px; font-weight: 500; color: #616161; white-space: nowrap; }
.menu .current { background: #f8f4f8; color: #714b67; }
.auth { display: flex; align-items: center; gap: 12px; margin-left: auto; }
.cta { width: 136px; height: 48px; border-radius: 8px; background: #714b67; color: #fff; font-size: 16px; font-weight: 600; line-height: 48px; text-align: center; box-shadow: 0 2px 8px rgba(113, 75, 103, .15); }

h1 { font-size: 48px; font-weight: 700; line-height: 56px; text-align: center; margin-top: 28px; }
.lead { width: 768px; margin: 12px auto 24px; font-size: 20px; line-height: 28px; text-align: center; color: #757575; }
.banner { height: 128px; border-radius: 16px; background: linear-gradient(135deg, #714b67, #875a7b); box-shadow: 0 8px 32px rgba(113, 75, 103, .14), 0 12px 36px rgba(113, 75, 103, .06); color: #fff; padding: 32px; display: flex; align-items: center; justify-content: space-between; }
.banner h2 { font-size: 24px; line-height: 32px; font-weight: 700; display: flex; align-items: center; gap: 12px; margin-bottom: 8px; }
.banner p { font-size: 16px; line-height: 24px; color: rgba(255, 255, 255, .9); }
.banner-stats { display: flex; align-items: center; gap: 16px; text-align: center; }
.banner-stats i { width: 1px; height: 48px; background: rgba(255, 255, 255, .2); }
.banner-stats strong { display: block; font-size: 24px; line-height: 32px; font-weight: 700; }
.banner-stats span { display: block; font-size: 14px; line-height: 20px; color: rgba(255, 255, 255, .8); }

.grid { display: grid; grid-template-columns: repeat(4, 286px); gap: 24px; }
.card { background: #fff; border-radius: 12px; box-shadow: 0 2px 8px rgba(113, 75, 103, .08); }
.stats { margin: 48px 0 48px; }
.stat { height: 128px; padding: 24px; }
.stat-row { display: flex; align-items: center; justify-content: space-between; height: 56px; margin-bottom: 16px; }
.stat span { display: block; font-size: 14px; line-height: 20px; font-weight: 500; color: #757575; }
.stat strong { display: block; font-size: 30px; line-height: 36px; font-weight: 700; }
.badge { width: 48px; height: 48px; border-radius: 12px; display: flex; align-items: center; justify-content: center; color: #fff; }
.badge, .tile { box-shadow: 0 10px 15px -3px rgba(0, 0, 0, .1), 0 4px 6px -4px rgba(0, 0, 0, .1); }
.blue { background: #3b82f6; }
.green { background: #22c55e; }
.purple { background: #a855f7; }
.orange { background: #f97316; }
.yellow { background: #eab308; }
.red { background: #ef4444; }
.royal { background: #2563eb; }
.track { height: 8px; border-radius: 4px; background: #eee; }
.track i { display: block; width: 75%; height: 8px; border-radius: 4px; background: linear-gradient(135deg, #714b67, #875a7b); }
.section-title { font-size: 24px; line-height: 32px; font-weight: 700; text-align: center; margin-bottom: 8px; }
.section-sub { font-size: 16px; line-height: 24px; text-align: center; color: #757575; margin-bottom: 32px; }
.course { height: 340px; padding: 32px; text-align: center; }
.tile { width: 80px; height: 80px; border-radius: 16px; margin: 0 auto 24px; display: flex; align-items: center; justify-content: center; }
.penguin { margin-top: 5px; }
.course h3 { font-size: 20px; line-height: 28px; font-weight: 600; margin-bottom: 12px; }
.course p { font-size: 14px; line-height: 23px; color: #757575; }

/* taskbar */
.taskbar { height: 48px; flex: none; border-top: 1px solid #45474d; background: linear-gradient(90deg, #242e2d 0, #232d30 420px, #232a33 700px, #262936 960px, #2a2536 1160px, #29242f 1900px); display: flex; align-items: center; }
.weather { width: 740px; display: flex; align-items: center; padding-left: 17px; }
.weather-icon { position: relative; width: 33px; height: 32px; margin-top: -2px; }
.weather-icon b { position: absolute; left: 13px; top: 0; width: 16px; height: 16px; border-radius: 50%; background: #ff99a4; color: #111; font-weight: 400; line-height: 16px; text-align: center; }
.weather-text { margin-top: -2px; }
.weather-text span { display: block; line-height: 16px; letter-spacing: -0.1px; }
.w2 { color: #c4c8c8; }
.dock { display: flex; margin-left: 2.500px; }
.dock span { position: relative; width: 40px; height: 40px; margin-right: 4.050px; display: flex; align-items: center; justify-content: center; }
.dock .running::after, .dock .focused::after { content: ""; position: absolute; bottom: 1px; left: 17px; width: 6px; height: 3px; border-radius: 2px; background: #a0a0a8; }
.dock .focused { background: #38333f; border-radius: 5px; box-shadow: 0 0 0 1px #403b48 inset; }
.dock .focused::after { left: 12px; width: 16px; background: #dd9fe6; }
.tray { margin-left: auto; display: flex; align-items: center; }
.tray span { display: flex; justify-content: center; }
.tray .i1 { width: 32px; }
.tray .i2 { width: 24px; }
.tray b { display: block; font-weight: 400; line-height: 16px; }
.tray .lang { width: 48px; padding-right: 4px; flex-direction: column; text-align: center; }
.tray .datetime { width: 75px; flex-direction: column; text-align: right; }
.tray .bell { width: 43px; padding-right: 13px; }
```
